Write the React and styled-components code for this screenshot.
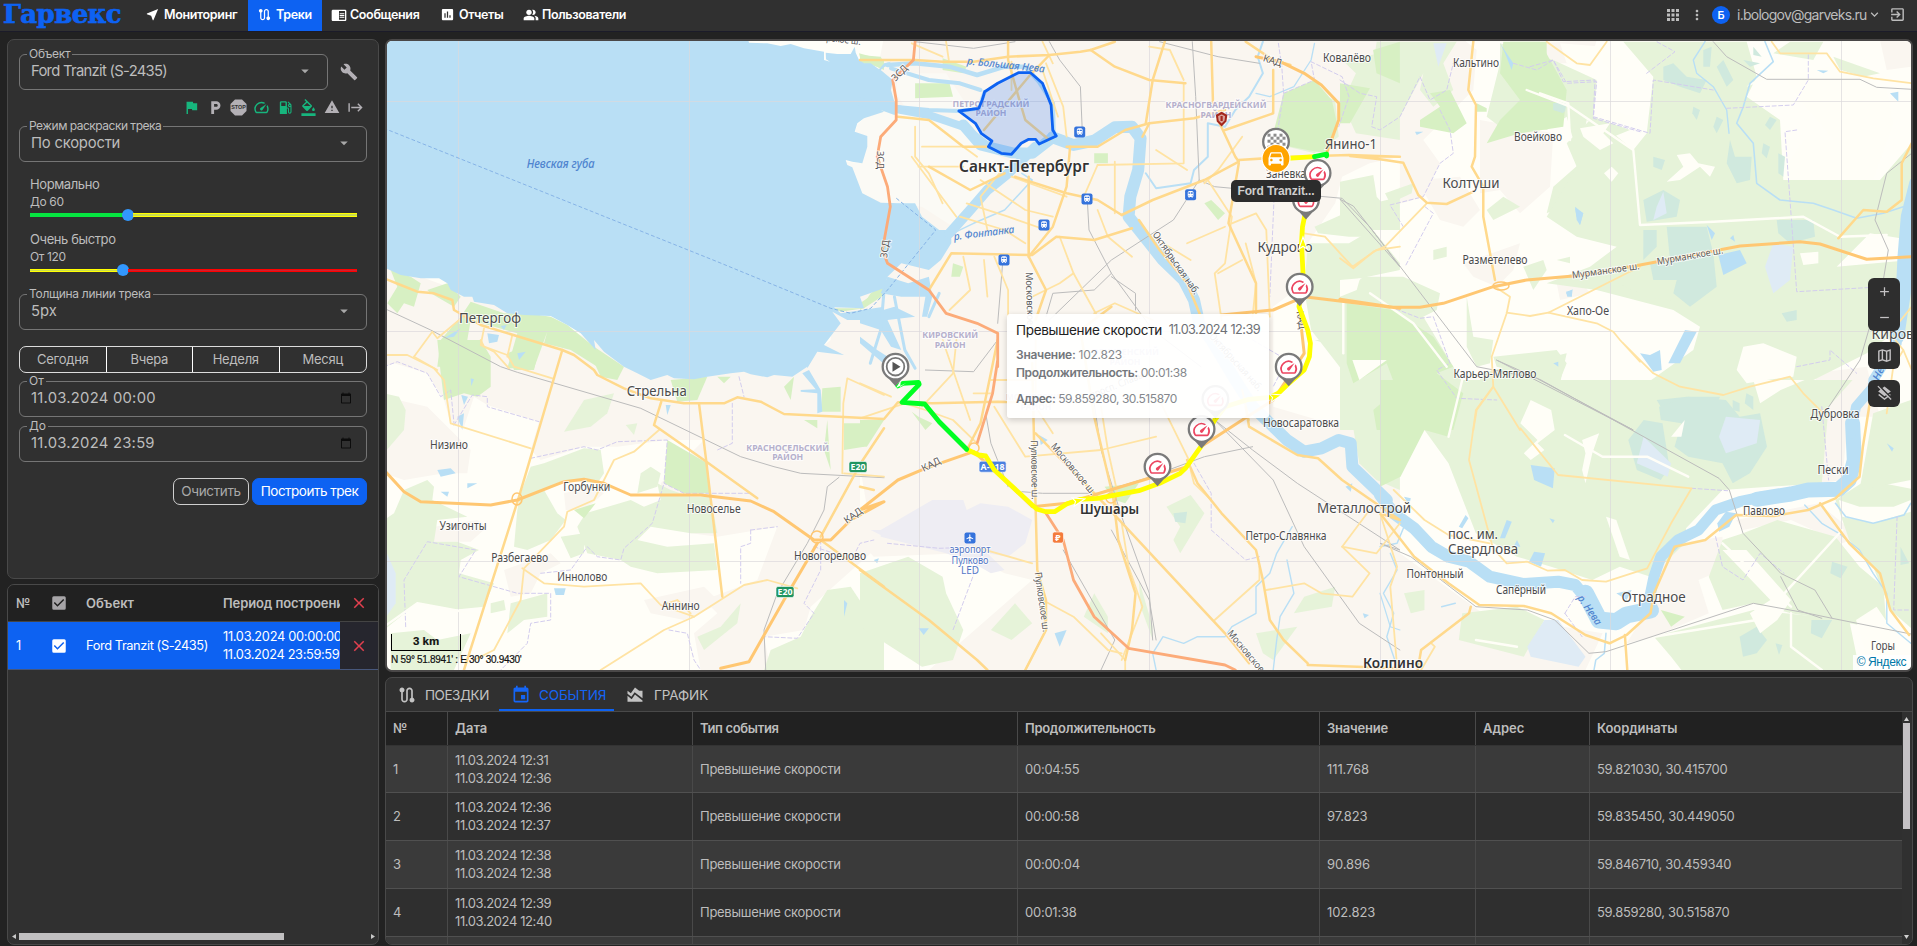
import React from "react";
import styled, { createGlobalStyle, css } from "styled-components";
import {
  MdNearMe, MdRoute, MdChromeReaderMode, MdAssessment, MdPeopleAlt, MdApps, MdMoreVert, MdExitToApp,
  MdExpandMore, MdBuild, MdFlag, MdLocalParking, MdSpeed, MdLocalGasStation, MdFormatColorFill, MdWarning,
  MdStart, MdArrowDropDown, MdCheckBox, MdClose, MdEvent, MdAreaChart, MdAdd, MdRemove, MdOutlineMap,
  MdLayersClear, MdDirectionsCar, MdFlight, MdTrain, MdCalendarToday,
} from "react-icons/md";

const GlobalStyle = createGlobalStyle`
  * { box-sizing: border-box; }
  body { margin: 0; background: #222; font-family: Inter, "Open Sans", sans-serif; font-size: 13px; color: #bdbdbd; overflow: hidden; }
  svg { display: block; flex: none; }
  button { font: inherit; letter-spacing: inherit; cursor: pointer; }
`;

/* ---------- shell ---------- */
const Page = styled.div`width: 1917px; height: 946px; display: flex; flex-direction: column; background: #222;`;
const Nav = styled.nav`height: 31px; flex: none; display: flex; align-items: stretch; background: #303030; box-shadow: 0 1px 0 #1b1b29;`;
const Logo = styled.div`
  width: 134px; padding-left: 3px; font: bold 26px/28px "DejaVu Serif", serif; color: #0d62f2; letter-spacing: -0.6px; -webkit-text-stroke: .7px #0d62f2;
`;
const NavItem = styled.a`
  display: flex; align-items: center; gap: ${(p) => p.$gap || 5}px; width: ${(p) => p.$w}px; padding: 0 0 2px ${(p) => p.$pl}px;
  color: #fff; font-weight: 600; font-size: 12.5px; letter-spacing: -0.35px; white-space: nowrap;
  background: ${(p) => (p.$active ? "#0d62f2" : "transparent")};
`;
const NavRight = styled.div`margin-left: auto; display: flex; align-items: center; padding: 0 11px 2px 0; color: #bdbdbd;`;
const Avatar = styled.span`
  width: 18px; height: 18px; margin: 0 7px; border-radius: 50%; background: #0d62f2; color: #fff; font-size: 11px; font-weight: 600;
  display: grid; place-items: center;
`;
const Email = styled.span`font-size: 14px; letter-spacing: -0.75px; width: 130px; white-space: nowrap;`;
const Gap = styled.span`width: ${(p) => p.$w}px;`;
const Main = styled.main`flex: 1; display: grid; grid-template-columns: 372px 1528px; column-gap: 6px; padding: 8px 4px 1px 7px; min-height: 0;`;
const Column = styled.div`display: flex; flex-direction: column; gap: 5px; min-height: 0;`;
const Panel = styled.section`
  border: 1px solid #494949; border-radius: 7px; background: #303030; overflow: hidden; height: ${(p) => p.$h}px;
`;

/* ---------- form ---------- */
const Form = styled(Panel)`padding: 7px 11px 0;`;
const Line = styled.div`display: flex;`;
const Wrench = styled.div`display: flex; align-items: center; padding: 7px 0 0 12px; color: #b3b0b5;`;
const Field = styled.fieldset`
  margin: ${(p) => p.$mt || 0}px 0 0; padding: 0 10px 0 7px; height: 43px; width: ${(p) => p.$w || 348}px; min-width: 0;
  border: 1px solid #757575; border-radius: 6px;
  legend { margin: 0; padding: 0 2px; font-size: 12px; line-height: 14px; letter-spacing: ${(p) => p.$ls || 0}px; white-space: nowrap; }
`;
const FieldValue = styled.div`
  display: flex; justify-content: space-between; align-items: center; height: 20px; padding-left: 4px; font-size: 14.8px;
  letter-spacing: ${(p) => p.$ls || 0}px;
  svg { margin-right: ${(p) => (p.$date ? 4 : 3)}px; color: ${(p) => (p.$date ? "#0c0c0c" : "#a8a8a8")}; }
`;
const Tools = styled.div`height: 18px; margin-top: 8px; display: flex; justify-content: flex-end; align-items: center; gap: 7.4px; padding-right: 4px;`;
const Tool = styled.span`width: 16px; color: ${(p) => (p.$on ? "#17b57d" : "#b3b0b5")};`;
const SliderBlock = styled.div`padding: 0 10px 0 11px; margin-top: ${(p) => p.$mt}px;`;
const SliderName = styled.div`height: 16px; line-height: 16px; letter-spacing: -0.4px;`;
const SliderLimit = styled.div`height: 17px; line-height: 19px; font-size: 12px; letter-spacing: -0.35px;`;
const Track = styled.div`
  height: 12px; display: flex; align-items: center;
  i { height: ${(p) => p.$thick}px; display: block; }
  i:first-child { width: ${(p) => p.$at}px; background: ${(p) => p.$left}; }
  i:last-child { flex: 1; background: ${(p) => p.$right}; }
`;
const Thumb = styled.b`width: 12px; height: 12px; border-radius: 50%; background: #3297fd; flex: none; margin: 0 -1px;`;
const Periods = styled.div`
  margin-top: 16px; height: 27px; display: grid; grid-template-columns: repeat(4, 1fr); border: 1px solid #dcdcdc; border-radius: 7px; overflow: hidden;
  span { display: grid; place-items: center; border-right: 1px solid #fff; letter-spacing: -0.25px; padding-bottom: 1px; }
  span:last-child { border: 0; }
`;
const Actions = styled.div`display: flex; justify-content: flex-end; gap: 3px; margin-top: 16px;`;
const Button = styled.button`
  height: 27px; width: ${(p) => p.$w}px; padding: 0 0 1px; border-radius: 7px; font-size: 13.5px; letter-spacing: ${(p) => p.$ls || 0}px;
  ${(p) => p.$primary
    ? css`background: #0d62f2; color: #fff; border: 1px solid #0d62f2;`
    : css`background: transparent; color: #a9a9a9; border: 1px solid #cfcfcf;`}
`;

/* ---------- list of built tracks ---------- */
const ListPanel = styled(Panel)`display: flex; flex-direction: column;`;
const ListRow = styled.div`
  height: ${(p) => (p.$head ? 37 : 48)}px; display: grid; grid-template-columns: 42px 36px 137px 117px 38px; align-items: center;
  line-height: 18px; white-space: nowrap; border-bottom: 1px solid ${(p) => (p.$head ? "#444" : "#47577c")};
  ${(p) => p.$head
    ? css`background: #212121; font-weight: 600; font-size: 13px;`
    : css`background: #0d62f2; color: #fff; font-size: 12.8px;`}
  > span:first-child { padding-left: 8px; }
  > span:nth-child(4) { overflow: hidden; }
`;
const Remove = styled.span`align-self: stretch; display: grid; place-items: center; color: #e2404f; background: ${(p) => (p.$dark ? "#26262e" : "#212121")};`;
const Sp = styled.span`letter-spacing: ${(p) => p.$ls || 0}px;`;
const Block = styled.div`letter-spacing: ${(p) => p.$ls || 0}px;`;
const HScroll = styled.div`
  margin-top: auto; height: 13px; display: flex; align-items: flex-start; padding: 2px 3px 0 4px; color: #c8c8c8;
  b { width: 265px; height: 7px; background: #c0bfc0; margin-left: 3px; }
  svg:last-child { margin-left: auto; }
`;

/* ---------- map ---------- */
const MapFrame = styled.section`
  height: 633px; border: 2px solid #4a4848; border-radius: 7px; overflow: hidden; background: #fffef8; position: relative; width: 1528px;
`;
const Controls = styled.div`position: absolute; right: 11px; top: 237px; display: flex; flex-direction: column; gap: 11px;`;
const Control = styled.div`width: 32px; height: ${(p) => p.$h || 27}px; border-radius: 6px; background: #2e2e2e; color: #c4c2c4; display: flex; flex-direction: column; justify-content: space-around; align-items: center;`;
const Popup = styled.div`
  position: absolute; left: 620px; top: 273px; width: 262px; height: 104px; background: rgba(255,255,255,.93); border-radius: 3px;
  box-shadow: 0 2px 6px rgba(0,0,0,.18); padding: 7px 9px; color: #85888d; font-size: 12px;
`;
const PopupHead = styled.div`
  display: flex; justify-content: space-between; height: 18px; line-height: 18px; align-items: center; font-size: 12.7px; letter-spacing: -0.55px; white-space: nowrap; margin-bottom: 7px;
  color: #6d7075;
  strong { font-weight: 400; font-size: 13.5px; color: #222; letter-spacing: -0.3px; }
`;
const PopupLine = styled.div`
  height: 18px; line-height: 18px; margin-top: ${(p) => p.$mt || 0}px; letter-spacing: ${(p) => p.$ls || 0}px; white-space: nowrap;
  b { font-weight: 600; color: #74777c; }
`;
const CarLabel = styled.div`
  position: absolute; left: 844px; top: 139px; width: 90px; height: 22px; border-radius: 5px; background: #2c2c2c; color: #cfcfcf;
  font: bold 12px/22px "Liberation Sans", sans-serif; text-align: center; letter-spacing: -0.1px;
`;
const ScaleBar = styled.div`
  position: absolute; left: 4px; bottom: 4px; color: #111; font: 10px/12px "Liberation Sans", sans-serif; letter-spacing: -0.3px; white-space: nowrap; -webkit-text-stroke: .2px #111;
  div { width: 70px; height: 17px; border: 1px solid #000; border-top: 0; text-align: center; font: bold 11.5px/15px "Liberation Sans", sans-serif; letter-spacing: 0; margin-bottom: 3px; }
`;
const Credit = styled.div`position: absolute; right: 0; bottom: 0; height: 15px; padding: 0 5px 0 4px; background: rgba(255,255,255,.85); color: #0078a8; font: 12px/15px "Liberation Sans", sans-serif; letter-spacing: -0.4px;`;

/* Survey sheets: origin and units per pixel of each local coordinate grid */
const SHEETS = {
  A: [384, 30, 3, 3], B: [860, 30, 2.904, 3], C: [860, 340, 2.904, 3], D: [384, 340, 3, 3],
  E: [1480, 0, 3, 3], F: [1380, 380, 2.92, 3], G: [1340, 30, 3, 3],
};
const path = (text, close) => {
  let sheet = SHEETS.A;
  const pts = [];
  text.trim().split(/\s+/).forEach((t) => {
    if (SHEETS[t]) { sheet = SHEETS[t]; return; }
    const [x, y] = t.split(",").map(Number);
    pts.push(`${(sheet[0] + x / sheet[2]).toFixed(1)},${(sheet[1] + y / sheet[3]).toFixed(1)}`);
  });
  return `M${pts.join("L")}${close ? "Z" : ""}`;
};

const AREAS = [
  ["#faf6f0", [
    "A 0,700 D 630,0 1270,60 1340,0 A 1340,840 1500,20 B 60,20 1568,20 G 360,20 410,60 400,180 250,330 300,400 250,500 150,530 B 1568,470 1568,380 1480,400 1400,440 1380,520 1300,640 1290,760 1200,830 C 1200,200 1330,240 1420,250 1568,330 1568,640 F 300,700 650,760 600,870 0,870 C 1568,990 200,990 500,720 420,700 300,640 40,650 D 1460,640 1280,800 1260,870 1140,890 1160,990 950,990 930,880 1000,820 960,780 1120,720 1180,560 1000,590 920,580 840,470 830,430 960,300 850,300 700,320 600,320 470,360 440,330 465,245 310,195 270,170 240,260 200,250 180,180 130,100 30,70 0,80",
    "D 0,170 130,200 260,330 250,400 180,400 60,420 0,400", "D 150,560 280,540 310,560 260,605 145,605", "D 360,690 500,640 530,670 470,700 440,760 380,770",
    "D 780,780 960,740 1010,790 900,840 800,820", "D 540,460 620,440 660,460 600,510 545,510",
    "E 0,360 220,400 210,560 120,640 60,570 0,580", "G 230,450 360,440 420,540 370,590 300,570", "G 370,700 540,640 520,720 470,770 400,740",
    "E 230,850 300,840 330,880 240,900", "E 170,130 350,120 330,190 220,190", "E 1200,120 1295,125 1295,200 1220,210", "E 1000,1120 1160,1100 1200,1250 1050,1250",
    "G 0,920 70,1000 150,1080 100,1140 120,1200 0,1200", "F 0,0 40,30 0,70",
    "F 870,490 1000,470 1000,570 930,600 960,700 800,770 720,790 780,690 800,600", "F 1040,420 1280,370 1400,470 1350,490 1200,420 1060,450", "F 1280,80 1370,80 1350,300 1280,310",
  ]],
  ["#fbfaf5", ["A 1500,245 1440,265 1420,285 1412,310 1450,350 1435,400 1385,395 1435,490 1495,518 B 180,530 270,590 330,540 440,400 370,360 280,290 100,245", "B 110,130 250,130 300,210 270,240 130,230 105,190"]],
  ["#e6f3d9", [
    "D 0,160 45,170 65,210 60,270 0,340", "D 30,520 60,450 130,420 150,440 145,480 250,530 160,540 150,605 220,605 285,630 230,660 225,700 330,730 300,800 200,810 100,790 0,870 0,540",
    "D 410,460 440,380 480,370 600,325 650,330 660,400 640,430 540,420 480,450 520,520 545,540 500,600 430,630 390,620 400,510",
    "D 605,520 740,480 780,500 830,480 820,430 860,450 920,470 980,470 1000,580 920,580 800,560 760,600 850,620 990,610 1000,690 820,700 740,680 710,660 610,640 580,560",
    "D 530,590 600,580 600,640 560,655", "D 770,400 800,380 830,400 820,440 760,460", "D 380,790 490,760 490,830 420,840 370,880", "D 20,880 120,870 160,900 260,880 210,990 20,990",
    "D 320,790 360,780 365,810 320,820", "D 540,275 600,180 690,160 670,220 620,260", "D 725,255 760,250 750,285",
    "D 1010,860 1070,790 1060,850 960,930 940,890", "D 1280,830 1330,750 1400,740 1460,830 1500,850 1500,990 1140,990 1160,930 1250,890",
    "C 0,700 140,650 240,710 250,760 300,870 270,960 180,980 0,860", "C 380,870 450,790 500,850 440,900", "C 680,760 720,830 720,880 650,830", "C 810,720 850,860 850,900 815,800",
    "C 890,500 960,465 1000,520 930,640 910,600 930,560", "C 1150,880 1270,860 1200,960 1170,940", "C 1290,770 1380,740 1370,800 1260,820",
    "C 1320,0 1568,0 1568,200 1450,230 1500,60", "C 1430,250 1568,200 1568,450 1500,420 1450,370",
    "B 1300,180 1380,210 1390,320 1320,370 1200,340 1230,200", "B 1400,90 1568,60 1568,330 1440,310 1400,220 1440,130",
    "B 1300,640 1420,640 1568,550 1568,720 1430,750 1568,800 1568,1020 1400,1020 1310,900 1290,780", "B 1320,590 1450,530 1568,500 1568,620 1420,620 1330,610",
    "G 110,35 350,35 310,100 340,180 280,230 240,180 250,130 180,260 90,300 60,190 100,100", "G 0,455 100,435 110,500 145,540 100,590 0,570", "G 135,490 220,460 215,490 150,520",
    "G 440,540 490,500 540,530 460,570", "G 280,660 320,650 320,680 280,690", "G 550,710 610,690 620,720 580,780", "G 650,690 690,680 690,700",
    "G 0,800 70,740 190,740 300,790 290,840 250,860 370,1060 380,1200 0,1200", "G 380,800 400,920 460,930 450,1000 410,1010 380,950",
    "G 460,980 650,960 680,1000 640,1100 540,1100 600,1040 470,1010", "G 330,1100 460,1070 540,1200 330,1200", "G 640,1150 700,1080 860,1140 900,1200 640,1200",
    "E 60,130 220,180 350,240 340,350 450,390 400,410 320,360 310,410 290,600 200,640 220,560 300,490 260,350 200,390 60,380 20,350 60,190",
    "E 430,125 800,125 830,230 800,290 900,360 910,540 1200,540 1295,430 1295,720 1170,700 1070,800 1295,780 1240,1000 1160,1060 960,1160 900,1260 570,1260 500,1150 640,1050 660,980 580,930 350,870 200,850 330,800 410,740 290,710 200,650 290,500 260,430 340,350 460,450 500,400 520,230",
    "E 930,125 1030,125 1000,180 880,160", "E 1060,170 1200,220 1150,230 1080,210", "E 350,820 450,800 640,850 620,910 500,890",
    "E 0,1120 260,1060 240,1150 130,1250 0,1250", "E 200,1130 420,1220 560,1180 600,1260 200,1260",
    "F 0,0 1380,0 1310,80 1290,310 1000,330 870,470 700,560 620,600 500,560 400,530 280,460 200,250 130,150 60,170 0,300",
    "F 700,560 870,330 900,480 790,590", "F 1060,460 1160,420 1330,470 1400,560 1470,620 1480,750 1320,720 1200,700 1090,670 1000,690 960,590 1000,480",
    "F 240,700 400,680 480,720 420,830 230,780", "F 70,640 130,630 130,690 90,700", "F 800,770 1090,690 1370,720 1400,870 880,870 850,830",
    "F 1330,360 1420,300 1568,330 1568,760 1490,690 1440,560 1370,480", "F 1440,100 1550,60 1550,300 1400,330", "E 1270,780 1295,830 1295,1000 1250,1000",
  ]],
  ["#d7f0c3", [
    "B 1230,190 1320,150 1370,210 1385,280 1350,370 1250,350 1200,310", "B 160,160 260,160 270,200 160,205", "B 0,75 60,80 75,110 0,100", "B 240,85 310,110 300,130 240,120",
    "B 680,370 720,370 720,400 680,400", "B 270,700 300,710 290,740 265,740", "B 1020,510 1060,550 1040,570 1000,520", "B 0,820 70,770 60,800 0,840", "B 1490,60 1568,35 1568,160 1500,130",
    "A 20,720 80,740 110,760 90,830 60,820 40,850 10,820 40,770", "A 130,780 190,760 230,800 210,830 140,790",
    "A 260,815 360,850 430,850 500,860 550,885 630,950 700,1010 640,1010 560,960 480,940 490,905 450,1015 370,1015 400,910 260,870 250,930 300,1010 160,1010 170,930 230,860",
    "A 1350,835 1430,835 1460,790 1500,765 1500,795 1440,835 1370,845", "A 1425,70 1500,90 1500,120 1430,90",
    "D 160,0 290,0 320,50 320,140 280,170 240,160 180,180 170,100", "D 370,40 470,0 450,90 390,90", "D 600,0 720,80 700,120 650,110",
    "D 860,120 970,110 940,180 880,185", "D 850,300 970,370 980,460 900,460 840,430", "D 1315,145 1370,140 1370,215 1310,215", "D 1380,250 1490,250 1440,320 1380,330", "D 1330,240 1340,390 1320,330", "D 1260,240 1300,240 1300,265",
    "D 570,510 635,490 600,535", "D 1000,110 1040,110 1020,130", "D 1200,140 1230,110 1220,180",
    "C 0,240 70,240 20,320 0,320", "C 170,230 210,250 190,270 150,215", "C 1500,0 1568,0 1568,80 1520,60", "C 710,440 810,430 770,490 740,480",
    "E 70,125 180,125 260,270 250,380 120,400 20,430 60,360 120,300 60,220", "G 0,160 90,175 30,280 0,280", "G 270,190 330,180 380,280 340,310 240,290 240,270 300,230",
    "G 20,820 160,840 280,920 340,1010 290,1030 370,1090 340,1200 110,1200 100,1140 170,1080 140,1000 40,1060 20,1000", "F 0,0 190,0 230,60 200,170 130,150 60,290 0,320",
    "G 510,35 620,35 620,90 530,100", "G 410,220 440,235 440,245 410,245", "F 820,690 890,710 850,740",
  ]],
  ["#d0e9de", [
    "E 550,200 580,190 620,230 680,240 660,280 600,260 550,240", "E 670,150 695,140 690,200 670,200", "E 710,200 730,180 760,240 740,260", "E 790,180 840,190 810,200", "E 820,140 845,170 820,165", "E 640,320 660,330 650,360 637,340",
    "E 710,350 730,360 710,400 700,380", "E 870,350 890,360 870,390 855,375", "E 520,470 555,480 545,510 520,500", "E 750,420 765,470 815,470 810,540 770,550 740,490", "E 850,430 870,440 860,475 845,460", "E 895,460 915,470 910,530 895,520",
    "E 490,600 550,570 600,600 590,650 500,665", "E 490,690 530,690 530,740 490,780", "E 560,680 680,680 700,760 710,860 630,920 580,880 590,840 520,840 510,790 570,780", "E 890,660 1000,660 1005,710 930,730 895,700", "E 905,940 950,930 950,960 920,965", "E 530,1200 620,1190 720,1190 700,1240 560,1250", "E 220,310 260,310 250,340 220,330",
    "F 725,180 770,120 825,130 845,260 820,300 750,270", "F 815,80 900,50 1010,60 1050,110 1110,100 1130,200 1080,280 1030,310 1000,250 900,230 860,200 880,130 820,120", "F 1030,60 1050,70 1050,95 1030,90", "F 1070,40 1090,50 1090,90 1065,70",
    "F 1320,545 1365,560 1345,595 1315,580", "F 1260,720 1320,720 1290,775 1258,760", "F 1050,770 1100,740 1130,780 1100,820 1060,830", "F 1155,790 1175,795 1165,825", "F 1520,500 1545,550 1520,555", "C 910,520 950,515 945,550 915,545",
    "G 640,220 680,215 675,245 640,240",
  ]],
  ["#dfebf5", ["E 550,575 560,640 520,660 530,620", "E 880,730 940,740 930,840 880,880 855,800", "F 770,170 850,250 840,290 750,250", "F 1010,110 1110,120 1100,190 1010,220 990,170", "D 0,620 35,700 35,790 0,840", "F 430,800 480,720 520,720 600,830 580,860 440,830", "G 280,40 320,40 295,110"]],
  ["#fffef7", [
    "E 810,250 900,210 960,300 1060,420 970,420 925,490 930,540 1180,540 1240,370 1220,270 1150,230 1050,200 960,220 880,230 800,260", "E 590,465 630,460 655,490 705,500 690,530 660,500 600,540 560,545 610,500", "E 372,520 395,500 415,520 395,545",
    "E 350,315 460,350 450,385 340,350", "E 300,385 390,370 370,400 400,430 360,450 310,410", "E 770,1110 790,1040 850,1030 950,1070 940,1130 860,1140 800,1150", "E 960,760 1015,755 1015,790 970,795", "E 370,150 430,180 400,220 370,190", "E 240,130 370,140 330,200 260,190",
    "F 440,60 500,90 510,150 460,190 480,210 440,240 420,220 460,180 410,130", "F 590,180 640,160 620,220 600,310 590,270 600,220", "F 660,410 690,420 730,540 700,530", "F 1090,0 1240,0 1170,30 1110,70", "F 850,170 890,120 880,170",
    "F 1000,510 1070,510 1200,660 1160,720 1110,760 1080,700 1140,660", "F 1390,720 1450,680 1490,740 1500,840 1430,860", "F 1340,360 1400,380 1500,380 1550,360 1550,395 1440,430 1350,410",
    "C 1430,60 1530,60 1450,120", "C 0,500 0,380 20,500", "G 0,750 60,745 50,780 0,800", "B 1490,600 1568,600 1568,700",
  ]],
  ["#eeedf3", ["C 60,570 210,480 300,480 310,510 350,490 430,500 500,540 480,610 430,650 370,640 420,690 380,700 330,670 250,640 60,590", "D 1460,570 1500,570 1500,590"]],
];

const GULF = "A 0,20 1090,20 1095,38 1150,40 1190,48 1220,42 1260,55 1320,65 1320,90 1338,95 1326,88 1325,68 1360,72 1400,72 1412,50 1415,68 1425,90 1440,100 1460,100 1485,118 B 70,100 90,95 60,120 95,150 90,180 100,215 120,240 100,255 60,240 A 1500,245 1440,265 1420,280 1412,305 1450,318 1450,350 1435,400 1405,395 1385,390 1390,405 1405,412 1435,490 1490,518 B 120,520 160,520 180,560 230,600 265,600 265,640 235,690 200,720 120,700 80,740 70,775 0,800 A 1440,835 1350,832 1370,850 1500,830 1500,870 1390,870 1345,845 1370,880 1320,945 1380,975 1300,965 1270,1015 D 1270,80 1225,110 1170,105 1150,112 1100,103 1080,95 1040,100 970,110 930,118 870,115 850,105 800,120 760,100 720,80 660,35 630,0 A 635,960 590,910 550,885 500,858 420,855 370,850 330,825 270,815 265,800 240,800 200,780 190,760 165,745 110,745 50,735 0,712";
const LAKES = [
  "E 480,1060 510,1065 540,1050 545,1110 520,1115", "E 615,990 650,995 600,1090 565,1090 580,1060", "E 715,765 780,750 800,790 730,825", "E 285,620 310,640 300,675 290,660", "E 680,675 705,700 695,720", "E 1230,280 1255,275 1255,305", "E 60,130 100,190 95,210 75,160", "E 1010,210 1045,212 1030,220", "E 258,875 275,870 275,890 262,890", "E 220,1090 235,1085 235,1100", "E 750,715 760,705 765,725",
  "F 440,255 510,265 505,325 450,300", "F 230,440 250,405 258,415 240,445", "F 350,475 370,420 385,425 365,475", "F 435,545 450,515 482,520 470,560", "F 985,430 1010,395 1040,400 1020,440 990,455", "F 690,640 735,630 720,660", "F 390,500 400,480 410,500", "F 70,350 90,355 85,375", "F 495,415 510,420 505,430", "F 1480,190 1500,205 1495,215",
  "A 310,910 345,915 340,935 315,940", "A 400,970 425,965 405,990", "A 350,888 368,885 360,900", "A 180,925 230,895 210,920", "D 160,390 200,385 215,400 170,410", "D 250,430 280,430 250,445", "D 170,455 195,455 190,470", "D 220,230 240,220 235,270", "D 232,165 252,170 240,195", "D 510,745 545,745 540,765 515,765", "D 845,195 860,195 850,225", "D 260,115 270,118 262,138", "D 1255,100 1275,90 1310,150 1315,215 1300,220 1300,160 1250,155 1250,150 1295,148", "D 1380,780 1390,790 1380,830",
  "C 170,865 200,865 185,885", "C 565,880 600,870 580,920", "C 520,285 545,300 525,315", "C 40,660 55,655 50,670", "C 1410,440 1430,430 1425,455", "C 1460,820 1478,825 1465,835",
  "B 0,860 100,830 160,860 80,870 120,960 90,950 60,900 0,880", "B 80,740 140,760 200,740 210,800 195,860 180,860 190,800 120,800 60,790", "B 0,920 50,960 110,1000 90,1020 0,940", "G 705,535 730,550 720,585 710,560", "G 678,790 698,778 695,800", "G 225,305 250,305 230,315",
];
const RIVERS = [
  [12, "B 560,322 620,345 680,332 740,292 790,290 815,325 808,420 785,500 780,560 830,625 880,690 940,750 970,810 985,880 1020,930 C 1090,120 1140,200 1190,250 1240,300 1290,335 1340,325 1390,300 1425,310 1430,380 1480,430 1530,480 F 0,345 40,400 100,445 150,500 200,530 260,545 320,590 420,612 520,605 570,615 610,665"],
  [17, "F 600,640 640,720 690,725 720,705 790,690"], [11, "F 780,690 800,590 820,530 870,480 930,450 980,390 1050,365 1120,350"], [15, "F 1100,358 1200,342 1250,330 1340,328 1370,300 1385,240 1380,130"], [10, "F 1375,160 1390,80 1440,20 E 1180,1140 1250,1030 1250,980"], [15, "E 1250,1010 1270,880 1275,770 1285,650 1310,550"],
  [11, "B 300,285 350,345 440,368 500,370 560,322"], [10, "B 510,350 430,430 370,480 320,540 260,610"],
  [8, "B 0,215 60,225 120,240 200,255 300,290 380,355"], [4.5, "B 80,105 160,100 260,110 340,135 420,110 480,110 520,155 560,220 562,310"], [4, "B 90,115 200,150 290,160 350,180"], [4, "B 100,230 200,240 290,243 345,235 362,185"], [3, "B 70,780 60,900 30,1000"], [3, "B 100,800 130,960 160,1015"], [3, "B 200,860 230,790"],
  [2, "B 1170,35 1155,80 1170,130 1130,200 1090,240 1060,290 1010,280 1010,380 970,420 960,460 860,475 830,430"], [1.3, "B 1320,40 1310,90 1260,170 1190,200 1150,190"],
  [1.5, "B 280,605 330,580 420,540 500,450 470,430"],
  [1.4, "E 675,125 640,180 650,220 700,260 740,330 747,400"], [1.6, "E 855,125 880,185 810,250 790,320 770,370 820,430 830,550 900,600 1000,610 1060,630 1130,655 1210,640 1270,620"],
  [1.4, "C 1255,560 1210,640 1190,700 1150,740 1150,820 1080,860 1060,890 980,890 940,910 880,890 850,940 860,990"], [1.4, "C 1240,660 1260,760 1220,830 1210,900 1200,990"], [1.5, "F 70,440 50,490 0,500"], [1.4, "F 30,520 50,570 10,640 40,700 20,770 50,860"],
  [1.4, "F 1240,375 1290,430 1340,460 1400,510 1440,580 1480,640 1480,730 1550,790"], [1.6, "F 1330,370 1360,410 1440,430 1530,405 1550,370"], [1.5, "F 660,760 655,820 630,840 625,870"], [1.4, "F 180,680 220,670"], [1.2, "C 1510,760 1540,860 1568,870"],
];
const MINOR = [
  "D 0,45 70,45 150,85 180,120 200,250 440,325", "A 90,980 145,905 160,925 250,850", "A 90,980 160,1020", "D 290,0 300,20 370,45 390,80 505,115", "A 300,895 290,945 330,965 375,1015", "A 385,915 370,980",
  "D 1375,400 1378,190 1390,115 1500,165", "D 1380,400 1500,410", "D 825,270 750,335 690,360 630,480 550,515 540,560 420,685 410,780 330,930 270,960", "D 415,685 480,730 600,740 770,730 830,795 930,830 840,870 650,990", "D 930,830 1080,735 1150,720 1240,745", "D 850,790 880,780 920,820",
  "B 250,35 258,90", "B 150,40 240,80", "B 440,95 440,180", "B 530,120 575,260", "B 540,100 590,230 600,320", "B 160,290 160,380 200,430 240,520", "B 180,350 300,350 340,380", "B 170,410 300,410", "B 740,395 740,550", "B 940,160 940,400 690,405", "B 690,405 650,500", "B 950,420 860,360", "B 840,50 900,60 940,150",
  "B 350,450 480,540 560,560", "B 420,410 350,500 370,600", "B 310,520 430,560 540,600", "B 290,560 420,600 480,640", "B 440,440 600,500", "B 490,460 490,670", "B 580,620 620,730 690,860", "B 690,540 720,620 790,680", "B 390,680 430,780 430,860", "B 300,680 320,780 260,840", "B 360,690 370,800", "B 500,800 580,760 620,730", "B 680,850 740,820 850,870", "B 150,380 280,560", "B 560,100 530,35",
  "B 1010,450 1080,560 1060,700 1030,730 1050,870", "B 1080,580 1150,550 1180,600 1190,860", "B 950,640 1060,590", "B 1040,730 1110,690", "B 880,640 960,690", "B 1120,640 1150,760 1140,860", "B 1290,610 1350,620 1430,710 1500,660 1568,650", "B 1110,320 1040,420 1000,460",
  "C 0,235 130,190 190,210 270,240 340,310", "C 240,0 320,240", "C 280,0 270,100 180,200", "C 0,130 90,170", "C 390,200 480,350 700,330 860,290", "C 510,0 510,200 560,280", "C 380,120 510,120", "C 860,160 960,370", "C 700,200 720,330 750,470", "C 1130,240 1110,150", "C 330,160 380,160",
  "C 1568,550 1500,640 1400,620 1480,510", "C 1400,620 1480,700 1430,770 1340,760 1290,730 1180,750", "C 1160,680 1160,720 1030,840", "C 960,390 970,430 1020,480", "C 330,620 500,670", "C 480,990 540,870 530,800", "C 700,880 770,960 770,990", "C 760,960 820,800 780,680 760,550", "C 530,780 620,830 720,930 760,940",
  "G 0,685 40,715 100,665 135,650 260,520", "G 465,770 510,800 500,850 455,980 460,1070 410,1140 400,1200", "G 500,848 570,858 625,848 860,730 900,710", "G 625,848 770,880 820,905 840,930 900,995 E 430,1030 520,1120 600,1160 730,1185 810,1160 930,1130 970,1180 1030,1240",
  "G 460,1070 540,1200 F 410,145 520,285 910,325 850,430 780,565 660,605 590,600 540,570 490,572 430,545 370,550 330,505 260,240 280,90 330,20", "F 40,330 130,420 200,465 320,490", "F 120,870 160,800 150,790", "F 0,400 50,560 30,620 40,740 50,860",
  "E 200,125 290,190 330,195 380,125", "E 875,125 900,160 1040,160 1080,215 1180,235 1295,250", "E 1270,1050 1295,1110", "E 1220,1240 1240,1100 1270,1050 1230,1000 1295,920",
];
const MAJOR = [
  "A 0,745 50,765 100,785 150,790 205,810 210,840 290,885 535,960 570,975 630,1020 D 640,105 720,145 800,175 900,190 1020,190 1060,172 1130,185 1200,222 1500,237 C 110,187 210,190 400,185 560,190", "A 535,960 D 535,30 405,470 240,990", "D 832,185 810,255 960,360 1120,475", "D 945,190 965,350 1015,770", "D 1500,265 1430,370 1310,590",
  "B 0,90 160,90 240,95 330,95 430,80 550,75 640,65 670,60 740,110 840,150 945,160", "B 670,60 740,35", "B 110,260 200,270 250,310 300,350 370,350", "B 430,35 430,90 460,200 480,270 550,330", "B 550,75 490,140 360,300", "B 600,350 690,350 770,300 840,280 970,265 1060,240", "B 610,350 600,470 560,590 490,680", "B 450,440 600,490 690,510 760,555", "B 760,555 850,510 1000,450 1100,395 1090,380 1040,270", "B 885,35 850,150 830,280", "B 1020,35 1025,220", "B 1120,35 1200,90 1250,105", "B 1200,120 1200,250 1060,300", "B 1100,390 1250,380 1420,375 1568,380 G 30,378 120,388 190,398 235,495 260,518 320,522 400,485", "B 200,780 265,670 500,675 570,620 680,630 790,595", "B 490,440 490,680 540,780 510,870", "B 200,410 320,480 420,430", "B 810,570 870,660 950,760 990,860", "B 1100,400 1070,580 1150,760 1150,850", "B 840,280 820,320",
  "B 730,830 640,900 C 680,230 735,470 750,520", "C 310,330 350,250 400,0", "C 500,70 510,500 515,690 540,780 C 540,870 480,990", "C 510,280 690,470 870,670 1060,880 1130,970", "C 735,470 750,600 800,760 790,870 770,960", "C 950,360 980,430 1050,520 1150,630 1170,720 1190,840 1230,900 1300,970", "C 1120,200 1130,260 1270,345 1330,355 1400,420 1568,540 F 0,400 100,530 200,610 290,675 420,678 500,700 600,765 670,790 720,765 790,700 800,640 860,500 950,480 1040,405 1150,408 1250,390 1330,355 1400,290 1410,200 1430,70", "F 715,765 722,870", "F 265,680 260,700 120,810 110,870", "F 1285,370 1370,490 1460,580 1490,690 1545,765",
  "G 400,35 385,180 408,225 405,380 395,410 430,470 430,560 465,750", "C 0,690 200,840 340,960 370,990", "D 1310,600 1500,740", "E 1295,430 1265,490 1265,600 1220,635 1150,630 1075,715", "C 1300,975 1568,985", "C 0,440 40,450",
];
const TRUNK = [
  "D 0,390 60,455 110,485 320,495 400,480 540,425 600,418 660,430 740,465 950,465 1100,483 1170,515 1290,600 1340,600 1400,540 1500,485 C 0,510 110,420 190,385 330,335", "D 1300,610 1200,780 1095,965 1010,985", "B 1150,80 1220,95 1290,130 1340,165 1390,220 1390,270 1355,370", "B 1050,855 1200,840 1290,800 1568,835 G 0,808 150,832 240,832 310,820 460,770 560,750 700,738 E 340,820 480,795 780,738 960,725 1020,732 1160,778 1295,770", "C 330,335 400,400 500,500 600,490 950,380 990,320 1200,180 B 1290,970 1275,830",
];
const MOTOR = ["B 160,35 155,90 95,150 105,210 105,270 60,320 50,380 80,470 88,530 65,660 80,700 200,780 250,850 340,880 400,910 400,1010 C 400,60 385,160 340,310", "C 540,520 590,600 620,720 680,830 780,925 1060,975 1090,990"];
const WHITEROADS = ["E 140,270 270,320 460,450 480,675 700,665 970,650 1080,710 1220,705", "F 540,165 650,230 780,230 900,290", "E 180,280 265,310 270,420", "G 90,790 220,880 320,1010", "F 1350,450 1110,720", "F 1000,490 1200,680", "F 280,780 400,800", "F 800,770 1100,720", "F 1200,700 1200,800 1290,870", "G 10,820 10,970", "F 240,0 200,170", "D 0,860 100,790 320,830"];
const RAILS = ["A 0,835 140,900 350,1010 D 400,97 770,205 1070,350 1170,380 1250,400 1500,413", "D 1365,412 1330,440 1320,510 1270,610 1180,760 1140,870 1145,990", "B 550,35 580,90 640,170 645,290", "B 160,35 330,55 450,35", "B 965,35 975,200 985,450 910,570 730,690 550,870", "B 870,35 1040,80 1160,100", "B 985,450 1030,470 1240,490 1400,505 1480,590 1568,710 G 0,508 40,528 135,650 410,1010 590,1045 880,1200 F 340,-60 470,0 990,295 1020,330 1060,460 1170,580 1270,630 1320,715 1550,762", "B 660,510 665,600 730,730 850,900 990,1010", "B 415,690 400,880", "B 730,730 680,780 560,790 540,860", "B 730,740 800,790 800,840", "C 680,190 700,330 760,530 840,760 850,900", "C 190,90 330,95 400,0", "C 470,455 530,460 690,460 830,415 1000,350 1140,320", "C 1030,240 1140,330 1270,430 1568,630 F 0,490 90,530 280,680 430,690 510,720 610,820 660,815 1090,670 1250,700 1320,715", "C 1030,240 1200,420 1290,620 1450,850 1568,930", "C 365,220 380,310 430,440", "C 730,570 840,780 860,900", "C 590,630 740,900 700,990", "E 700,125 740,170 860,238 1140,238 1190,262 1295,268", "E 1295,460 1220,520 1185,660 1225,750 1210,840 1140,1080 1040,1230", "F 1170,590 1220,690 1290,715"];
const BORDERS = ["D 0,80 40,65 130,100 170,170 200,150 210,250", "D 210,255 265,165 310,170 310,200 465,245", "D 440,355 600,320 640,330 700,305 850,300 840,430 900,460 1100,460", "D 65,860 60,720 130,605 275,630 225,710 400,760 500,760 500,840 440,850 430,910 350,990", "D 470,700 560,690 610,620 640,650 710,660 720,625 805,550 840,430", "D 1100,570 1180,560", "D 1100,570 1100,610 1070,620 1070,730", "D 1310,600 1310,690 1260,790 1290,820 1240,895 1140,890", "D 855,870 910,880 930,960 950,990", "D 1045,190 1045,310 1000,330", "D 1065,110 1080,170", "B 1215,40 1225,110 1230,190 1210,320 1190,800", "B 1230,190 1320,150 1310,95 1400,140 1420,200 1390,290", "C 970,370 1020,460 1020,570 1120,660 1160,650", "C 1140,0 1240,60 1200,140", "C 360,620 310,760 270,870", "C 80,610 230,625 360,620", "G 0,150 60,190 110,200 95,290 120,300 180,260 240,140 270,210 320,180 340,100", "G 300,240 330,300 340,370 300,400 250,500 150,525 190,590", "G 255,530 280,550 195,710", "G 150,830 240,865 280,860 330,1000 290,1020 350,1105 470,1110", "G 520,100 590,120 640,90 680,160 770,155 760,265 900,305", "E 150,200 220,180 250,245 345,240 340,350 510,400 520,240 700,270", "E 500,220 585,155 530,125", "E 740,325 940,315 985,240 985,160", "E 950,390 915,395 950,875 1210,860", "E 950,1100 1050,1080 1050,1050 1130,1120", "F 1290,80 1310,300", "F 540,700 570,650 600,650", "F 540,700 590,770", "F 980,470 1000,560 1060,600 1110,520 1180,580", "F 910,325 1015,332", "F 1510,410 1500,690 1550,690", "D 1290,620 1380,650 1400,665 C 0,610 40,600"];

const Z = "Noto Sans, Open Sans, sans-serif";
const PLACES = [
  ["Петергоф", 490, 318, 15, 62], ["Стрельна", 656.7, 391, 15, 60], ["Низино", 449, 445.5, 12, 38], ["Горбунки", 586.7, 487.5, 12, 47], ["Узигонты", 463, 526, 12, 47],
  ["Разбегаево", 519.7, 558.5, 12, 57], ["Иннолово", 582.3, 577, 12, 50], ["Аннино", 680.7, 606.5, 12, 38], ["Новоселье", 713.7, 508.7, 12, 54], ["Новогорелово", 830, 556, 12, 72],
  ["Ковалёво", 1347, 58, 12, 48], ["Янино-1", 1351, 144, 15, 52], ["Заневка", 1286, 174.5, 12, 40], ["Кудрово", 1285, 247, 15, 55], ["Новосаратовка", 1301, 423, 12, 76],
  ["Металлострой", 1364, 508.5, 15, 94], ["Петро-Славянка", 1286, 536.5, 12, 81], ["пос. им.", 1473, 534, 15, 50], ["Свердлова", 1483, 549, 15, 70], ["Понтонный", 1435, 574, 12, 57],
  ["Сапёрный", 1521, 590.5, 12, 50], ["Отрадное", 1653.6, 597.5, 15, 64], ["Павлово", 1764, 511, 12, 42], ["Пески", 1833, 470.5, 12, 31], ["Дубровка", 1835, 414.5, 12, 49],
  ["Горы", 1883, 646.5, 12, 24], ["Кировск", 1900, 334, 15, 57], ["Кальтино", 1476, 63, 12, 46], ["Воейково", 1538, 137, 12, 48], ["Колтуши", 1471, 183, 15, 57], ["Разметелево", 1495, 260, 12, 65],
  ["Хапо-Ое", 1588, 311.5, 12, 42], ["Карьер-Мяглово", 1495, 374, 12, 83],
];
const CITIES = [["Санкт-Петербург", 1024, 166.5, 16.5, 130], ["Шушары", 1109.6, 509.5, 15, 59], ["Колпино", 1393, 663.5, 15, 60]];
const DISTRICTS = [
  ["КРАСНОСЕЛЬСКИЙ", 787.7, 447.5, 83], ["РАЙОН", 787.7, 457.3, 31], ["КИРОВСКИЙ", 950.2, 335, 56], ["РАЙОН", 950.2, 345, 31], ["ПЕТРОГРАДСКИЙ", 991, 103.7, 77], ["РАЙОН", 991, 113.3, 31],
  ["КРАСНОГВАРДЕЙСКИЙ", 1216, 105, 101], ["РАЙОН", 1216, 115, 31], ["ФРУНЗЕНСКИЙ", 1125, 352, 68], ["РАЙОН", 1125, 362, 31], ["МОСКОВСКИЙ", 1036, 397, 60], ["РАЙОН", 1036, 407, 31],
];
const STREETS = [
  ["Мурманское ш.", 1605.7, 270.7, 68, -8], ["Мурманское ш.", 1690, 256, 67, -10], ["КАД", 1272.5, 60.7, 19, 17], ["КАД", 931, 464.7, 20, -27], ["КАД", 853, 515.7, 20, -35],
  ["ЗСД", 899.6, 73, 18, -45], ["ЗСД", 880.6, 160, 18, 90], ["ЗСД", 885, 249, 18, -82], ["Октябрьская наб.", 1176, 263, 74, 55], ["Московское ш.", 1030, 305, 66, 88],
  ["Пулковское ш.", 1034.6, 470, 59, 89], ["Пулковское ш.", 1042, 602, 60, 82], ["Московское ш.", 1073.5, 469, 64, 50], ["Московское ш.", 1250, 656, 64, 50], ["просп. Славы", 1117, 385, 58, -22], ["Октябрьская наб.", 1236, 362, 74, 48], ["КАД", 1301, 320, 18, 82], ["Приморское ш.", 830, 38, 62, 7],
];
const WATERNAMES = [["Невская губа", 560.7, 164, 68, 0, 12], ["р. Большая Нева", 1006, 65, 78, 6, 10.5], ["р. Фонтанка", 984, 233, 61, -7, 10.5], ["р. Нева", 1589.6, 610, 34, 55, 10.5], ["Нева", 1881, 368, 26, -65, 10.5]];
const STATIONS = [[1079.7, 132], [1087, 199], [1190.6, 194.7], [1044, 225], [1004, 260]];

const Label = ({ t, x, y, size, w, rot = 0, color = "#4b4b4b", weight = 400, italic }) => (
  <text x={x} y={y} dy=".33em" textAnchor="middle" fontSize={size} textLength={w} lengthAdjust="spacingAndGlyphs" transform={rot ? `rotate(${rot} ${x} ${y})` : undefined}
    fontFamily={Z} fontWeight={weight} fontStyle={italic ? "italic" : "normal"} fill={color} stroke="#fff" strokeWidth="2" strokeOpacity={italic ? 0 : 0.75} paintOrder="stroke">{t}</text>
);
const Lines = ({ items, ...rest }) => <g fill="none" strokeLinejoin="round" strokeLinecap="round" {...rest}>{items.map((d, i) => <path key={i} d={path(d)} />)}</g>;

const Pin = ({ x, y, kind }) => (
  <g transform={`translate(${x} ${y})`}>
    <path d="M-8.5 10 L0 19.5 L8.5 10Z" fill="#7a7a7a" />
    <circle r="12.8" fill="#fff" stroke="#7a7a7a" strokeWidth="2.3" />
    {kind === "speed" && <g transform="translate(-10 -9.5)" stroke="#ec4560" strokeWidth=".5"><MdSpeed size={20} color="#ec4560" /></g>}
    {kind === "play" && <><circle r="8.8" fill="#fff" stroke="#777" strokeWidth="1.8" /><path d="M-3 -5 L5 0 L-3 5Z" fill="#555" /></>}
    {kind === "finish" && <g fill="#8d8d8d">{[0, 1, 2, 3, 4].map((r) => [0, 1, 2].map((c) => <rect key={r + "-" + c} x={-8.5 + c * 6 + (r % 2) * 3} y={-8 + r * 3} width="3" height="3" />))}</g>}
  </g>
);
const Badge = ({ x, y, w, text, color }) => (
  <g><rect x={x - w / 2} y={y - 5.5} width={w} height="11" rx="2" fill={color} stroke="#fff" strokeWidth=".6" />
    <text x={x} y={y + 3.2} textAnchor="middle" fontFamily={Z} fontWeight="700" fontSize="8.8" fill="#fff">{text}</text></g>
);
const IconBadge = ({ x, y, Icon }) => <g transform={`translate(${x - 5.5} ${y - 5.5})`}><rect width="11" height="11" rx="2" fill="#3573dc" /><g transform="translate(1.2 1)"><Icon size={8.6} color="#fff" /></g></g>;
const Heading = ({ x, y, rot }) => <path transform={`translate(${x} ${y}) rotate(${rot})`} d="M0 -8 L4.2 4 L0 1.5 L-4.2 4Z" fill="#ff0" stroke="#fff" strokeWidth="1.1" />;

function TrackMap() {
  return (
    <svg width="1524" height="629" viewBox="387 41 1524 629">
      {AREAS.map(([color, items]) => <g key={color} fill={color}>{items.map((d, i) => <path key={i} d={path(d, true)} />)}</g>)}
      <path d={path(GULF, true)} fill="#b9dff5" />
      <g fill="#b9dff5">{LAKES.map((d, i) => <path key={i} d={path(d, true)} />)}</g>
      <g fill="none" stroke="#b9dff5" strokeLinejoin="round" strokeLinecap="round">{RIVERS.map(([w, d], i) => <path key={i} d={path(d)} strokeWidth={w} />)}</g>
      <g stroke="#dcd9dc" strokeOpacity=".7">{[458.5, 689.5, 919.5, 1149.5, 1380.5, 1610.5, 1841.5].map((x) => <path key={x} d={`M${x} 41V670`} />)}{[101.5, 331.5, 561.5].map((y) => <path key={y} d={`M387 ${y}H1911`} />)}</g>
      <Lines items={BORDERS} stroke="#d3cdee" strokeWidth="1" strokeDasharray="4 2.5" />
      <Lines items={["A 0,295 450,475 1000,695 1340,835 1400,850 1460,835 B 80,780 220,600 100,500"]} stroke="#86b3e6" strokeWidth="1" strokeDasharray="3 3" />
      <Lines items={WHITEROADS} stroke="#fffef7" strokeWidth="2.4" />
      <Lines items={RAILS} stroke="#bcbcbc" strokeWidth="1" />
      <Lines items={MINOR} stroke="#ffe3a3" strokeWidth="1.8" />
      <Lines items={MAJOR} stroke="#ffd98c" strokeWidth="2.5" />
      <Lines items={TRUNK} stroke="#ffc772" strokeWidth="3" />
      <Lines items={MOTOR} stroke="#fcab79" strokeWidth="2.8" />
      <g fill="none" stroke="#ffc772" strokeWidth="1.5"><circle cx="817" cy="537" r="6" /><ellipse cx="1501" cy="286" rx="8" ry="4" /><ellipse cx="517" cy="499" rx="5" ry="6" /><circle cx="974" cy="448" r="5" /><circle cx="1111" cy="498" r="5" /></g>
      {DISTRICTS.map(([t, x, y, w]) => <Label key={t + x + y} t={t} x={x} y={y} w={w} size={9.3} color="#b5b0cc" weight={700} />)}
      {PLACES.map(([t, x, y, s, w]) => <Label key={t} t={t} x={x} y={y} size={s} w={w} />)}
      {CITIES.map(([t, x, y, s, w]) => <Label key={t} t={t} x={x} y={y} size={s} w={w} weight={600} color="#333" />)}
      {STREETS.map(([t, x, y, w, rot]) => <Label key={t + x} t={t} x={x} y={y} size={9.8} w={w} rot={rot} color="#5a5a5a" />)}
      {WATERNAMES.map(([t, x, y, w, rot, s]) => <Label key={t} t={t} x={x} y={y} size={s} w={w} rot={rot} color="#4f84cf" weight={500} italic />)}
      <Label t="аэропорт" x={970} y={550} size={10} w={41} color="#5377c5" />
      <Label t="Пулково" x={970} y={560.5} size={10} w={37} color="#5377c5" />
      <Label t="LED" x={970} y={571} size={10} w={18} color="#5377c5" />
      {STATIONS.map(([x, y]) => <IconBadge key={x} x={x} y={y} Icon={MdTrain} />)}
      <IconBadge x={970} y={538} Icon={MdFlight} />
      <Badge x={858} y={467} w={18} text="E20" color="#1f9460" />
      <Badge x={785} y={592} w={18} text="E20" color="#1f9460" />
      <Badge x={992.6} y={466.7} w={27} text="А-118" color="#4a80e0" />
      <Badge x={1058} y={537.5} w={11} text="₽" color="#f47b3c" />

      <path d={path("B 287,243 345,235 355,210 362,185 400,160 460,128 495,128 530,160 555,225 560,300 570,318 520,342 510,328 490,328 468,340 440,373 410,370 373,350 383,333 352,310 335,280", true)} fill="rgba(13,98,242,.2)" stroke="#0d62f2" strokeWidth="2.8" strokeLinejoin="round" />
      <Lines items={["C 310,328 345,345 365,348 390,390 500,495 515,508 540,515 565,515 600,492 640,478 690,475 810,452 870,430 930,400 945,385 990,320 1030,240 1060,200 1130,178 1190,172 1215,160 1240,135 1290,90 1305,50 B 1308,940 1300,900 1275,830 1287,740 1282,640 1285,590 1295,540", "B 1230,386 1320,380"]} stroke="#ff0" strokeWidth="4.8" />
      <Lines items={["C 110,138 125,130 170,127 172,133 122,187 188,192 230,245 310,328", "B 1320,380 1355,372 1355,378"]} stroke="#0f2" strokeWidth="4.8" />
      <Heading x={1077} y={501} rot={75} /><Heading x={1274} y={397} rot={75} /><Heading x={1303} y={245} rot={0} />
      <path d="M896 388 l5 -8 -1 7 6 -4z" fill="#fff" />
      <Pin x={895.5} y={366.7} kind="play" />
      <Pin x={1215.4} y={399} kind="speed" />
      <Pin x={1201.6} y={429} kind="speed" />
      <Pin x={1157.5} y={466.7} kind="speed" />
      <Pin x={1288.7} y={366.7} kind="speed" />
      <Pin x={1299.7} y={286.7} kind="speed" />
      <Pin x={1306} y={200} kind="speed" />
      <Pin x={1317.6} y={173} kind="speed" />
      <Pin x={1276} y={141.7} kind="finish" />
      <circle cx="1276" cy="158.5" r="14" fill="#ffa400" stroke="#fff" strokeWidth="1.2" />
      <g transform="translate(1266 148)"><MdDirectionsCar size={20} color="#fff" /></g>
      <path d="M1217 115.5 L1221.6 113 L1226.2 115.5 L1225.5 121 L1221.6 125 L1217.7 121Z" fill="#d9a39c" stroke="#a5281c" strokeWidth="2" /><path d="M1220.5 116v5h2.2v-5z" fill="#a5281c" />
    </svg>
  );
}

/* ---------- events table ---------- */
const Tabs = styled.div`height: 34px; display: flex; border-bottom: 1px solid #494949;`;
const Tab = styled.div`
  display: flex; align-items: center; gap: ${(p) => p.$gap || 8}px; width: ${(p) => p.$w}px; padding: 2px 0 0 ${(p) => p.$pl}px; font-size: 13.5px; letter-spacing: ${(p) => p.$ls || 0}px; white-space: nowrap;
  color: ${(p) => (p.$active ? "#1565f5" : "#c3c3c3")}; border-bottom: 2px solid ${(p) => (p.$active ? "#0d62f2" : "transparent")};
`;
const Scroller = styled.div`display: flex; height: 233px;`;
const Table = styled.div`width: 1516px; overflow: hidden;`;
const Row = styled.div`
  display: grid; grid-template-columns: 62px 245px 325px 302px 156px 114px 312px; height: ${(p) => (p.$head ? 34 : p.$h)}px;
  background: ${(p) => (p.$head ? "#212121" : p.$odd ? "#3a3a3a" : "#2f2f2f")}; font-weight: ${(p) => (p.$head ? 600 : 400)};
  border-bottom: 1px solid ${(p) => (p.$head ? "#333" : "#505050")};
`;
const Cell = styled.div`
  display: flex; align-items: center; padding: 0 0 1px ${(p) => p.$pl || 7}px; line-height: 18px; border-right: 1px solid #494949; letter-spacing: ${(p) => p.$ls || 0}px; white-space: nowrap;
  &:last-child { border-right: 0; }
`;
const VScroll = styled.div`
  width: 10px; background: #303030; display: flex; flex-direction: column; align-items: center; color: #d0d0d0; padding: 5px 1px 6px 0;
  b { width: 7px; height: 106px; background: #c4c1c4; margin-top: 2px; }
  svg:last-child { margin-top: auto; }
`;
const EVENTS = [
  ["1", "11.03.2024 12:31", "11.03.2024 12:36", "00:04:55", "111.768", "59.821030, 30.415700"],
  ["2", "11.03.2024 12:36", "11.03.2024 12:37", "00:00:58", "97.823", "59.835450, 30.449050"],
  ["3", "11.03.2024 12:38", "11.03.2024 12:38", "00:00:04", "90.896", "59.846710, 30.459340"],
  ["4", "11.03.2024 12:39", "11.03.2024 12:40", "00:01:38", "102.823", "59.859280, 30.515870"],
];
const Tri = ({ d, w, h }) => <svg width={w} height={h}><path d={d} fill="currentColor" /></svg>;

const StopSign = () => (
  <svg width="17" height="17" viewBox="0 0 17 17"><path d="M5 .5h7L16.5 5v7L12 16.5H5L.5 12V5z" fill="#b3b0b5" /><text x="8.5" y="10.4" textAnchor="middle" fontSize="5.4" fontWeight="700" fontFamily="Liberation Sans" fill="#303030">STOP</text></svg>
);
const Select = ({ label, value, w, mt, ls, vls }) => (
  <Field $w={w} $mt={mt} $ls={ls}><legend>{label}</legend><FieldValue $ls={vls}><span>{value}</span><MdArrowDropDown size={18} /></FieldValue></Field>
);
const DateField = ({ label, value, mt }) => (
  <Field $mt={mt}><legend>{label}</legend><FieldValue $date $ls={0.25}><span>{value}</span><MdCalendarToday size={12} /></FieldValue></Field>
);

export default function App() {
  return (
    <>
      <GlobalStyle />
      <Page>
        <Nav>
          <Logo>Гарвекс</Logo>
          <NavItem $w={114} $pl={11} $gap={4}><MdNearMe size={15} />Мониторинг</NavItem>
          <NavItem $w={74} $pl={9} $gap={4} $active><MdRoute size={15} />Треки</NavItem>
          <NavItem $w={109} $pl={9} $gap={3}><MdChromeReaderMode size={16} />Сообщения</NavItem>
          <NavItem $w={83} $pl={9} $gap={4}><MdAssessment size={15} />Отчеты</NavItem>
          <NavItem $w={120} $pl={9} $gap={3}><MdPeopleAlt size={16} />Пользователи</NavItem>
          <NavRight>
            <MdApps size={18} /><Gap $w={7} /><MdMoreVert size={16} />
            <Avatar>Б</Avatar><Email>i.bologov@garveks.ru</Email><MdExpandMore size={15} /><Gap $w={7} /><MdExitToApp size={17} />
          </NavRight>
        </Nav>
        <Main>
          <Column>
            <Form $h={540}>
              <Line>
                <Select label="Объект" value="Ford Tranzit (S-2435)" w={309} ls={-0.3} vls={-0.7} />
                <Wrench><MdBuild size={18} /></Wrench>
              </Line>
              <Tools>
                <Tool $on><MdFlag size={17} /></Tool><Tool><MdLocalParking size={17} /></Tool><Tool><StopSign /></Tool><Tool $on><MdSpeed size={17} /></Tool>
                <Tool $on><MdLocalGasStation size={17} /></Tool><Tool $on><MdFormatColorFill size={17} /></Tool><Tool><MdWarning size={16} /></Tool><Tool><MdStart size={17} /></Tool>
              </Tools>
              <Select label="Режим раскраски трека" value="По скорости" mt={3} ls={-0.5} vls={-0.2} />
              <SliderBlock $mt={14}>
                <SliderName>Нормально</SliderName><SliderLimit>До 60</SliderLimit>
                <Track $thick={4} $at={93} $left="#05e540" $right="linear-gradient(#ff0 25%, #c9dc4e 25% 75%, #ff0 75%)"><i /><Thumb /><i /></Track>
              </SliderBlock>
              <SliderBlock $mt={10}>
                <SliderName>Очень быстро</SliderName><SliderLimit>От 120</SliderLimit>
                <Track $thick={3} $at={88} $left="linear-gradient(#ff0 33%, #c9dc4e 33% 66%, #ff0 66%)" $right="linear-gradient(#f00 33%, #d02030 33% 66%, #f00 66%)"><i /><Thumb /><i /></Track>
              </SliderBlock>
              <Select label="Толщина линии трека" value="5px" mt={11} ls={-0.3} />
              <Periods><span>Сегодня</span><span>Вчера</span><span>Неделя</span><span>Месяц</span></Periods>
              <DateField label="От" value="11.03.2024 00:00" mt={1} />
              <DateField label="До" value="11.03.2024 23:59" mt={2} />
              <Actions><Button $w={76} $ls={-0.35}>Очистить</Button><Button $primary $w={115} $ls={-0.5}>Построить трек</Button></Actions>
            </Form>
            <ListPanel $h={361}>
              <ListRow $head><span>№</span><MdCheckBox size={18} color="#a7a5a8" /><span>Объект</span><Sp $ls={-0.1}>Период построения</Sp><Remove><MdClose size={18} /></Remove></ListRow>
              <ListRow><span>1</span><MdCheckBox size={18} color="#fff" /><Sp $ls={-0.4}>Ford Tranzit (S-2435)</Sp><span><Block $ls={-0.3}>11.03.2024 00:00:00</Block><Block $ls={-0.35}>11.03.2024 23:59:59</Block></span><Remove $dark><MdClose size={18} /></Remove></ListRow>
              <HScroll><Tri w={4} h={7} d="M4 1v5L0 3.5z" /><b /><Tri w={4} h={7} d="M0 1v5L4 3.5z" /></HScroll>
            </ListPanel>
          </Column>
          <Column>
            <MapFrame>
              <TrackMap />
              <Popup>
                <PopupHead><strong>Превышение скорости</strong><span>11.03.2024 12:39</span></PopupHead>
                <PopupLine $ls={-0.25}><b>Значение:</b> 102.823</PopupLine>
                <PopupLine $ls={-0.4}><b>Продолжительность:</b> 00:01:38</PopupLine>
                <PopupLine $mt={8} $ls={-0.45}><b>Адрес:</b> 59.859280, 30.515870</PopupLine>
              </Popup>
              <CarLabel>Ford Tranzit...</CarLabel>
              <Controls>
                <Control $h={53}><MdAdd size={15} /><MdRemove size={15} /></Control>
                <Control><MdOutlineMap size={17} /></Control>
                <Control><MdLayersClear size={17} /></Control>
              </Controls>
              <ScaleBar><div>3 km</div>N 59° 51.8941' : E 30° 30.9430'</ScaleBar>
              <Credit>© Яндекс</Credit>
            </MapFrame>
            <Panel $h={268}>
              <Tabs>
                <Tab $w={113} $pl={11} $ls={-0.45}><MdRoute size={20} />ПОЕЗДКИ</Tab>
                <Tab $w={115} $pl={12} $ls={-0.15} $active><MdEvent size={20} />СОБЫТИЯ</Tab>
                <Tab $w={110} $pl={11} $ls={-0.1} $gap={9}><MdAreaChart size={20} />ГРАФИК</Tab>
              </Tabs>
              <Scroller>
                <Table>
                  <Row $head><Cell>№</Cell><Cell>Дата</Cell><Cell $ls={-0.35}>Тип события</Cell><Cell $ls={-0.3}>Продолжительность</Cell><Cell $ls={-0.2}>Значение</Cell><Cell>Адрес</Cell><Cell $ls={-0.1}>Координаты</Cell></Row>
                  {EVENTS.map(([n, a, b, dur, v, c], i) => (
                    <Row key={n} $odd={i % 2 === 0} $h={i === 0 ? 47 : 48}>
                      <Cell>{n}</Cell><Cell $ls={-0.4}><div>{a}<br />{b}</div></Cell><Cell $ls={-0.28}>Превышение скорости</Cell><Cell $ls={-0.25}>{dur}</Cell><Cell $ls={-0.1}>{v}</Cell><Cell /><Cell $ls={-0.3}>{c}</Cell>
                    </Row>
                  ))}
                  <Row $odd $h={30}><Cell /><Cell /><Cell /><Cell /><Cell /><Cell /><Cell /></Row>
                </Table>
                <VScroll><Tri w={7} h={4} d="M1 4h5L3.5 0z" /><b /><Tri w={7} h={4} d="M1 0h5L3.5 4z" /></VScroll>
              </Scroller>
            </Panel>
          </Column>
        </Main>
      </Page>
    </>
  );
}
